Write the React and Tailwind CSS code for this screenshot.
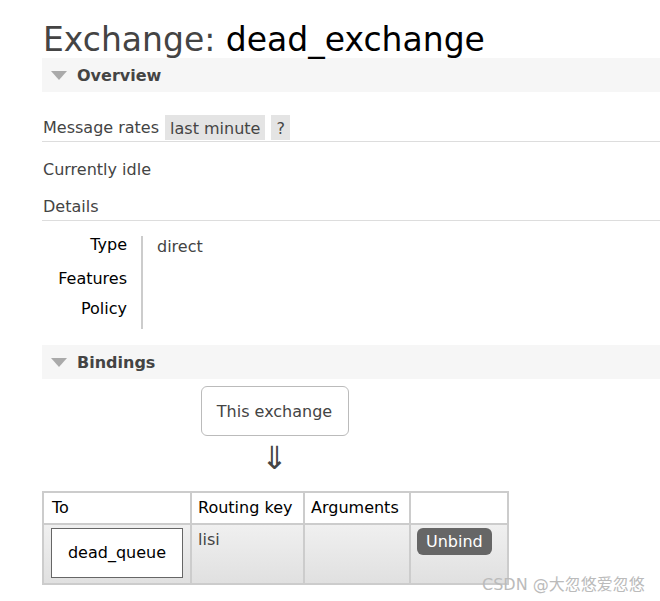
export default function App() {
  const font = { fontFamily: '"DejaVu Sans", Verdana, sans-serif' };
  return (
    <div className="w-[660px] h-[601px] bg-white overflow-hidden text-[#444] text-[16px] relative" style={font}>
      <div className="pl-[42px] pt-[20px]">
        <h1 className="text-[33px] leading-[38px] pl-px pt-px h-[38px]">
          Exchange: <span className="text-black">dead_exchange</span>
        </h1>

        <div className="h-[34px] bg-[#f6f6f6] flex items-center pt-[2px]">
          <svg width="16" height="10" viewBox="0 0 16 10" className="ml-[9px]"><polygon points="0,0 16,0 8,9" fill="#aaa" /></svg>
          <span className="ml-[10px] font-bold text-[16px] text-[#444]">Overview</span>
        </div>

        <div className="mt-[22px] flex items-end border-b border-[#ddd] pb-px">
          <span className="pl-px leading-[24px] pt-[2px]">Message rates</span>
          <span className="ml-[6px] bg-[#e4e4e4] px-[5px] h-[25px] leading-[25px] pt-[1px]">last minute</span>
          <span className="ml-[6px] bg-[#e4e4e4] px-[5px] h-[25px] leading-[25px] pt-[1px]">?</span>
        </div>

        <div className="mt-[16px] pl-px leading-[24px]">Currently idle</div>
        <div className="mt-[13px] pl-px leading-[24px] border-b border-[#ddd] pb-[1px]">Details</div>

        <div className="mt-[13px] flex">
          <div className="w-[86px] text-right text-black flex flex-col pr-[1px]">
            <span className="leading-[22px] h-[34px]">Type</span>
            <span className="leading-[22px] h-[30px]">Features</span>
            <span className="leading-[22px] h-[30px]">Policy</span>
          </div>
          <div className="ml-[13px] mt-[2px] w-[2px] h-[93px] bg-[#ccc]" />
          <div className="ml-[14px] leading-[24px] pt-[1px]">direct</div>
        </div>

        <div className="mt-[16px] h-[34px] bg-[#f6f6f6] flex items-center pt-[2px]">
          <svg width="16" height="10" viewBox="0 0 16 10" className="ml-[9px]"><polygon points="0,0 16,0 8,9" fill="#aaa" /></svg>
          <span className="ml-[10px] font-bold text-[16px] text-[#444]">Bindings</span>
        </div>

        <div className="w-[465px] flex flex-col items-center">
          <div className="mt-[7px] w-[148px] h-[50px] border border-[#bbb] rounded-[6px] flex items-center justify-center pt-[2px]">
            This exchange
          </div>
          <div className="mt-[6px] h-[32px] text-[32px] leading-[32px] text-[#444] overflow-visible">⇓</div>
        </div>

        <table className="mt-[17px] w-[465px] table-fixed border-collapse border-2 border-[#ccc] text-black">
          <thead>
            <tr className="bg-white">
              <th className="w-[148px] h-[32px] border-2 border-[#ccc] text-left font-normal px-[8px] align-middle">To</th>
              <th className="w-[113px] border-2 border-[#ccc] text-left font-normal px-[6px] whitespace-nowrap">Routing key</th>
              <th className="w-[106px] border-2 border-[#ccc] text-left font-normal px-[6px] whitespace-nowrap">Arguments</th>
              <th className="w-[98px] border-2 border-[#ccc]"></th>
            </tr>
          </thead>
          <tbody>
            <tr className="bg-gradient-to-b from-[#f0f0f0] to-[#e0e0e0]">
              <td className="h-[60px] border-2 border-[#ccc] px-[7px] align-top pt-[3px]">
                <div className="w-[132px] h-[50px] bg-white border border-[#666] flex items-center justify-center">dead_queue</div>
              </td>
              <td className="border-2 border-[#ccc] align-top px-[6px] text-[#444] leading-[24px] pt-[3px]">lisi</td>
              <td className="border-2 border-[#ccc]"></td>
              <td className="border-2 border-[#ccc] align-top pt-[3px] pl-[6px]">
                <span className="inline-block bg-[#666] text-white rounded-[6px] px-[9px] leading-[27px]">Unbind</span>
              </td>
            </tr>
          </tbody>
        </table>
      </div>
      <div className="absolute left-[482px] top-[573px] text-[16px] text-[#bbb]" style={{ fontFamily: '"DejaVu Sans", "Noto Sans CJK SC", sans-serif' }}>
        CSDN @大忽悠爱忽悠
      </div>
    </div>
  );
}
